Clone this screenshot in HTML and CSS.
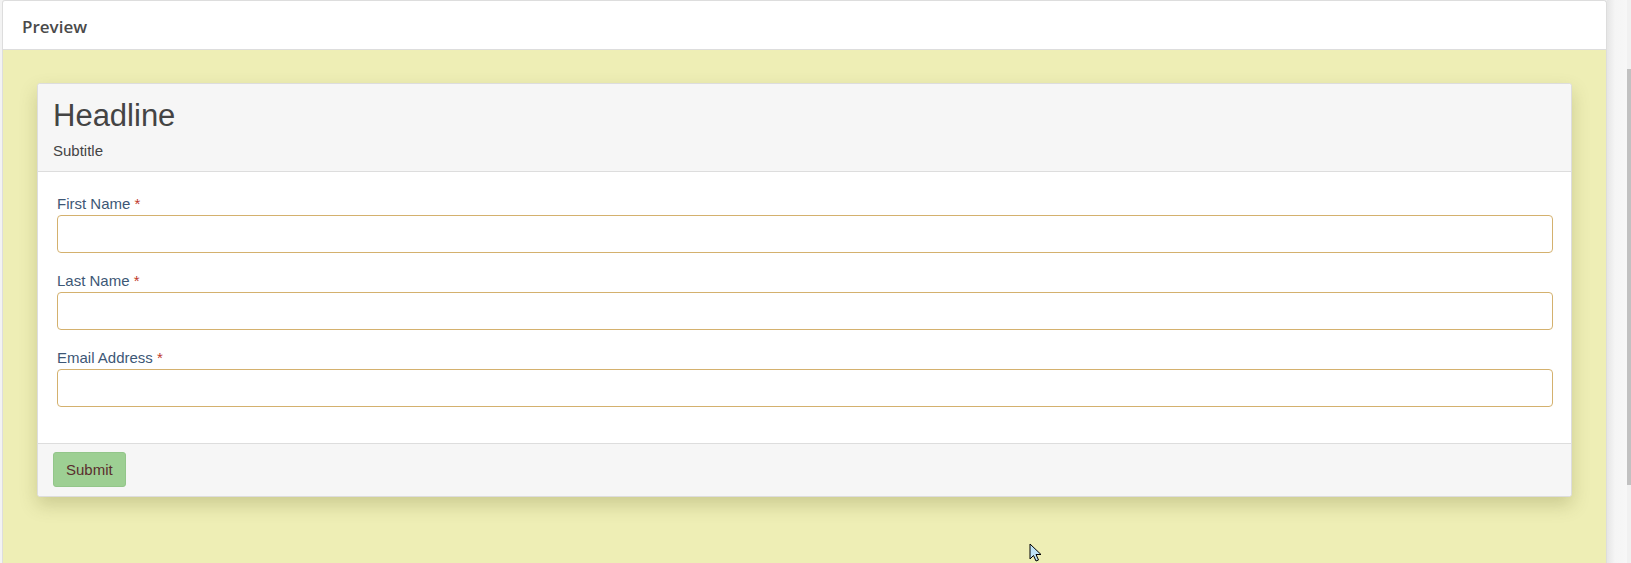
FILE: index.html
```html
<!DOCTYPE html>
<html lang="en">
<head>
  <meta charset="UTF-8" />
  <meta name="viewport" content="width=device-width, initial-scale=1.0" />
  <title>Form Preview</title>
  <link rel="stylesheet" href="styles.css">
</head>
<body>
  <div class="shell">
    <div class="panel">
      <div class="panel-head">Preview</div>
      <div class="panel-body">
        <form class="card" onsubmit="return false;">
          <div class="card-head">
            <h1 class="headline">Headline</h1>
            <div class="subtitle">Subtitle</div>
          </div>
          <div class="card-body">
            <div class="field">
              <label for="firstName">First Name <span class="req">*</span></label>
              <input type="text" id="firstName" />
            </div>
            <div class="field">
              <label for="lastName">Last Name <span class="req">*</span></label>
              <input type="text" id="lastName" />
            </div>
            <div class="field">
              <label for="email">Email Address <span class="req">*</span></label>
              <input type="email" id="email" />
            </div>
          </div>
          <div class="card-foot">
            <button type="submit" class="btn">Submit</button>
          </div>
        </form>
      </div>
    </div>
    <div class="gutter"></div>
    <div class="scrollbar"><div class="thumb"></div></div>
  </div>

  <!-- mouse pointer -->
  <svg class="pointer" width="14" height="20" viewBox="0 0 14 20">
    <path d="M1 1 L1 16 L4.5 12.5 L7 18 L9.5 17 L7 11.5 L12 11.5 Z" fill="#bfe3f7" stroke="#000" stroke-width="1" stroke-linejoin="miter"/>
  </svg>
</body>
</html>
```

FILE: styles.css
```css
:root {
  --page-bg: #f3f3f3;
  --canvas: #eeeeb5;
  --line: #dddddd;
  --label: #3d5776;
  --field-border: #d4b16e;
  --btn-bg: #9dcf93;
}
html, body {
  margin: 0;
  height: 100%;
  overflow: hidden;
}
body {
  font-family: "Liberation Sans", Arial, sans-serif;
  background: var(--page-bg);
  color: #444;
}
.shell {
  display: flex;
  height: 100vh;
  padding-left: 2px;
}
.panel {
  flex: 0 0 1605px;
  box-sizing: border-box;
  display: flex;
  flex-direction: column;
  border: 1px solid var(--line);
  border-bottom: none;
  border-radius: 3px 3px 0 0;
  background: #fff;
  overflow: hidden;
}
.panel-head {
  height: 44px;
  padding: 4px 0 0 19px;
  line-height: 44px;
  font-family: "Open Sans", sans-serif;
  font-weight: 600;
  font-size: 17px;
  color: #4a4a4a;
  border-bottom: 1px solid var(--line);
}
.panel-body {
  flex: 1;
  background: var(--canvas);
  padding: 33px 34px 0;
}
.gutter {
  flex: 0 0 20px;
  background: linear-gradient(to right, #e6e6e6, #f5f5f5 40%, #f7f7f7);
}
.scrollbar {
  flex: 1;
  background: #f1f1f1;
  padding-top: 69px;
}
.thumb {
  height: 416px;
  background: #c1c1c1;
}

.card {
  display: block;
  background: #fff;
  border: 1px solid var(--line);
  border-radius: 3px;
  box-shadow: 0 8px 18px rgba(80, 80, 20, 0.22);
}
.card-head {
  background: #f6f6f6;
  padding: 13px 15px 10px;
  border-bottom: 1px solid var(--line);
  border-radius: 3px 3px 0 0;
}
.headline {
  margin: 0 0 7px;
  font-size: 31px;
  line-height: 37px;
  font-weight: 400;
  color: #444;
}
.subtitle {
  font-size: 15px;
  line-height: 20px;
  color: #444;
}
.card-body {
  padding: 22px 18px 18px 19px;
}
.field {
  margin-bottom: 18px;
}
.field label {
  display: block;
  font-size: 15px;
  line-height: 20px;
  margin-bottom: 1px;
  color: var(--label);
}
.req {
  color: #c0392b;
}
.field input {
  display: block;
  box-sizing: border-box;
  width: 100%;
  height: 38px;
  margin: 0;
  padding: 6px 10px;
  font-size: 15px;
  font-family: inherit;
  border: 1px solid var(--field-border);
  border-radius: 4px;
  background: #fff;
  outline: none;
}
.card-foot {
  background: #f6f6f6;
  border-top: 1px solid var(--line);
  padding: 8px 15px 9px;
  border-radius: 0 0 3px 3px;
}
.btn {
  height: 35px;
  padding: 0 12px;
  font-family: "Liberation Sans", Arial, sans-serif;
  font-size: 15px;
  color: #5a2e2e;
  background: var(--btn-bg);
  border: 1px solid #93c68a;
  border-radius: 3px;
  cursor: pointer;
}

.pointer {
  position: absolute;
  left: 1029px;
  top: 543px;
}
```
